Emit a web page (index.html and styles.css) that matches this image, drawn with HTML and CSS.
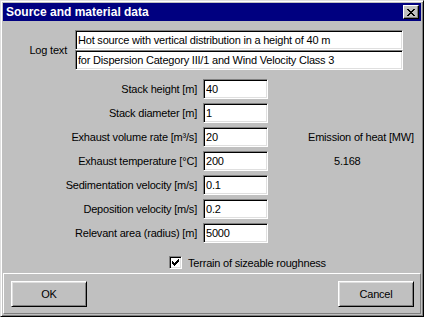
FILE: index.html
```html
<!DOCTYPE html>
<html lang="en">
<head>
    <meta charset="UTF-8">
    <title>Source and material data</title>
    <link rel="stylesheet" href="styles.css">
</head>
<body>
    <div class="window">
        <div class="titlebar">
            <span class="title">Source and material data</span>
            <button class="close" aria-label="Close">
                <svg width="8" height="7" viewBox="0 0 8 7" shape-rendering="crispEdges">
                    <path d="M0 0h2v1h-2zM6 0h2v1h-2zM1 1h2v1h-2zM5 1h2v1h-2zM2 2h4v1h-4zM3 3h2v1h-2zM2 4h4v1h-4zM1 5h2v1h-2zM5 5h2v1h-2zM0 6h2v1h-2zM6 6h2v1h-2z" fill="#000"/>
                </svg>
            </button>
        </div>

        <div class="main">
            <div class="log-row">
                <label class="log-label">Log text</label>
                <div class="log-fields">
                    <input class="field" type="text" value="Hot source with vertical distribution in a height of 40 m">
                    <input class="field" type="text" value="for Dispersion Category III/1 and Wind Velocity Class 3">
                </div>
            </div>

            <div class="params">
                <label class="param-label">Stack height [m]</label>
                <input class="field" type="text" value="40">

                <label class="param-label">Stack diameter [m]</label>
                <input class="field" type="text" value="1">

                <label class="param-label">Exhaust volume rate [m³/s]</label>
                <input class="field" type="text" value="20">

                <label class="param-label">Exhaust temperature [°C]</label>
                <input class="field" type="text" value="200">

                <label class="param-label">Sedimentation velocity [m/s]</label>
                <input class="field" type="text" value="0.1">

                <label class="param-label">Deposition velocity [m/s]</label>
                <input class="field" type="text" value="0.2">

                <label class="param-label">Relevant area (radius) [m]</label>
                <input class="field" type="text" value="5000">

                <div class="heat">
                    <span class="heat-title">Emission of heat [MW]</span>
                    <span class="heat-value">5.168</span>
                </div>
            </div>

            <div class="check-row">
                <span class="checkbox">
                    <svg width="7" height="7" viewBox="0 0 7 7" shape-rendering="crispEdges">
                        <path d="M6 0h1v1h-1zM5 1h2v1h-2zM0 2h1v1h-1zM4 2h3v1h-3zM0 3h2v1h-2zM3 3h3v1h-3zM0 4h5v1h-5zM1 5h3v1h-3zM2 6h1v1h-1z" fill="#000"/>
                    </svg>
                </span>
                <span class="check-label">Terrain of sizeable roughness</span>
            </div>
        </div>

        <div class="button-panel">
            <button class="btn">OK</button>
            <button class="btn">Cancel</button>
        </div>
    </div>
</body>
</html>
```

FILE: styles.css
```css
* {
    box-sizing: border-box;
}

html, body {
    margin: 0;
    padding: 0;
    overflow: hidden;
}

body {
    background-color: #c0c0c0;
    font-family: "Liberation Sans", Arial, sans-serif;
    font-size: 11px;
    letter-spacing: -0.2px;
    color: #000;
}

.window {
    width: 424px;
    height: 317px;
    background-color: #c0c0c0;
    border: 1px solid;
    border-color: #dfdfdf #000 #000 #dfdfdf;
    box-shadow: inset 1px 1px #fff, inset -1px -1px #808080;
    padding: 2px;
    display: flex;
    flex-direction: column;
}

.titlebar {
    height: 18px;
    flex: none;
    background-color: #000080;
    color: #fff;
    font-size: 12px;
    font-weight: bold;
    letter-spacing: 0;
    display: flex;
    align-items: center;
    justify-content: space-between;
    padding: 0 2px 0 3px;
}

.close {
    width: 16px;
    height: 14px;
    padding: 0;
    margin: 0;
    background-color: #c0c0c0;
    border: 1px solid;
    border-color: #fff #000 #000 #fff;
    box-shadow: inset -1px -1px #808080;
    display: flex;
    align-items: center;
    justify-content: center;
}

.main {
    height: 252px;
    flex: none;
    padding-top: 9px;
    display: flex;
    flex-direction: column;
}

/* inset text boxes, win95 style */
.field {
    height: 20px;
    margin: 0;
    padding: 0 1px 0 2px;
    border: 1px solid;
    border-color: #808080 #fff #fff #808080;
    box-shadow: inset 1px 1px #000, inset -1px -1px #dfdfdf;
    background-color: #fff;
    font-family: inherit;
    font-size: 11px;
    letter-spacing: -0.2px;
    color: #000;
    outline: none;
}

.log-row {
    display: grid;
    grid-template-columns: 64px 328px;
    column-gap: 8px;
    align-items: center;
}

.log-label {
    text-align: right;
}

.log-fields {
    display: flex;
    flex-direction: column;
}

.log-fields .field {
    width: 328px;
}

.params {
    margin-top: 9px;
    display: grid;
    grid-template-columns: 194px 65px 1fr;
    grid-auto-rows: 20px;
    column-gap: 6px;
    row-gap: 4px;
    align-items: center;
}

.param-label {
    grid-column: 1;
    text-align: right;
}

.params .field {
    grid-column: 2;
    width: 65px;
}

.heat {
    grid-column: 3;
    grid-row: 3 / span 2;
    display: grid;
    grid-template-rows: 20px 20px;
    row-gap: 4px;
    align-items: center;
}

.heat-title {
    padding-left: 34px;
}

.heat-value {
    padding-left: 60px;
}

.check-row {
    margin-top: 13px;
    padding-left: 166px;
    display: flex;
    align-items: center;
    gap: 6px;
    height: 13px;
}

.checkbox {
    width: 13px;
    height: 13px;
    background-color: #fff;
    border: 1px solid;
    border-color: #808080 #fff #fff #808080;
    box-shadow: inset 1px 1px #000, inset -1px -1px #dfdfdf;
    display: flex;
    align-items: center;
    justify-content: center;
}

.button-panel {
    height: 41px;
    flex: none;
    border: 1px solid;
    border-color: #fff #808080 #808080 #fff;
    padding: 7px 6px 6px 7px;
    display: flex;
    justify-content: space-between;
}

.btn {
    width: 76px;
    height: 26px;
    margin: 0;
    padding: 0;
    background-color: #c0c0c0;
    border: 1px solid;
    border-color: #fff #000 #000 #fff;
    box-shadow: inset 1px 1px #dfdfdf, inset -1px -1px #808080;
    font-family: inherit;
    font-size: 11px;
    letter-spacing: -0.2px;
    color: #000;
}
```
